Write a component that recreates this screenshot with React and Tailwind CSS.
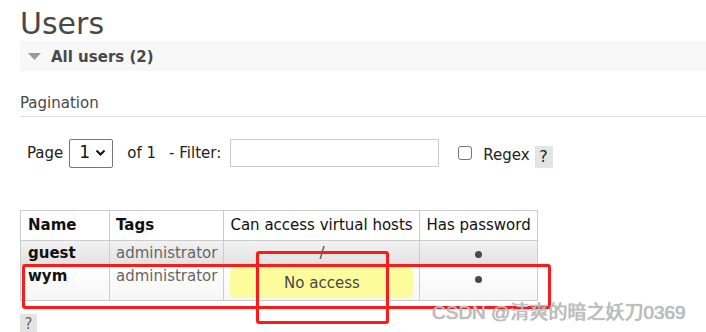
export default function App() {
  const font = { fontFamily: '"DejaVu Sans", Verdana, sans-serif' };
  const dot = <span className="inline-block h-[7px] w-[7px] rounded-full bg-[#484848]" />;
  return (
    <div className="relative w-[706px] h-[332px] overflow-hidden bg-white text-[#484848]" style={font}>
      <div className="pl-[20px]">
        <h1 className="h-[41px] pt-[5px] text-[30px] leading-[38px] text-[#484848] font-normal">Users</h1>
        <div className="flex h-[30px] items-center bg-[#f8f8f8] pl-[8px]">
          <svg width="13" height="8" viewBox="0 0 13 8" className="mr-[10px] mt-[2px]">
            <polygon points="0,0 13,0 6.5,7" fill="#999" />
          </svg>
          <span className="mt-[2px] text-[15px] font-bold text-[#484848]">All users (2)</span>
        </div>
        <div className="mt-[23px] w-[686px] border-b border-[#dddddd] pb-[3px] text-[15px] leading-[19px]">Pagination</div>
        <div className="mt-[21px] flex items-center pl-[7px] text-[15px] text-[#222]">
          <span>Page</span>
          <div className="ml-[6px] flex h-[29px] w-[44px] items-center justify-between rounded-[2px] border border-[#767676] pl-[9px] pr-[6px] text-[17px] text-[#111]">
            <span>1</span>
            <svg width="11" height="8" viewBox="0 0 11 8"><path d="M1.5 1.5 L5.5 5.5 L9.5 1.5" stroke="#111" strokeWidth="2" fill="none" /></svg>
          </div>
          <span className="ml-[14px]">of 1</span>
          <span className="ml-[13px]">- Filter:</span>
          <div className="ml-[9px] h-[28px] w-[209px] border border-[#cccccc]" />
          <div className="ml-[19px] h-[14px] w-[14px] rounded-[3px] border border-[#767676]" />
          <span className="ml-[11px] mt-[5px]">Regex</span>
          <span className="ml-[5px] mt-[8px] flex h-[22px] w-[18px] items-center justify-center bg-[#e4e4e4] text-[16px]">?</span>
        </div>
        <table className="mt-[42px] border-collapse text-[15px]" style={{ tableLayout: 'fixed' }}>
          <colgroup>
            <col style={{ width: 89 }} />
            <col style={{ width: 114 }} />
            <col style={{ width: 196 }} />
            <col style={{ width: 118 }} />
          </colgroup>
          <thead>
            <tr className="h-[30px] text-[#111]">
              <th className="border border-[#cccccc] px-[7px] text-left font-bold">Name</th>
              <th className="border border-[#cccccc] px-[6px] text-left font-bold">Tags</th>
              <th className="border border-[#cccccc] px-[6px] text-left font-normal whitespace-nowrap">Can access virtual hosts</th>
              <th className="border border-[#cccccc] px-[6px] text-left font-normal whitespace-nowrap">Has password</th>
            </tr>
          </thead>
          <tbody>
            <tr className="h-[24px] bg-gradient-to-b from-[#f2f2f2] to-[#e2e2e2] leading-[18px]">
              <td className="border border-[#cccccc] px-[7px] font-bold text-[#111]">guest</td>
              <td className="border border-[#cccccc] px-[6px] text-[#666]">administrator</td>
              <td className="border border-[#cccccc] text-center text-[#484848]">/</td>
              <td className="border border-[#cccccc] text-center">{dot}</td>
            </tr>
            <tr className="h-[36px] bg-gradient-to-b from-[#ffffff] to-[#f6f6f6] leading-[18px]">
              <td className="border border-[#cccccc] px-[7px] pt-[2px] align-top font-bold text-[#111]">wym</td>
              <td className="border border-[#cccccc] px-[6px] pt-[2px] align-top text-[#666]">administrator</td>
              <td className="border border-[#cccccc] px-[6px] py-[2px]">
                <div className="flex h-[31px] items-center justify-center rounded-[6px] bg-[#fcfc9c] text-[#484848]">No access</div>
              </td>
              <td className="border border-[#cccccc] pt-[8px] align-top text-center leading-[10px]">{dot}</td>
            </tr>
          </tbody>
        </table>
        <div className="mt-[13px] flex h-[20px] w-[17px] items-center justify-center bg-[#e4e4e4] text-[15px] text-[#666]">?</div>
      </div>
      <div className="absolute left-[22px] top-[264px] h-[45px] w-[529px] rounded-[3px] border-[3px] border-[#ff1a1a]" />
      <div className="absolute left-[256px] top-[251px] h-[73px] w-[133px] rounded-[3px] border-[3px] border-[#ff1a1a]" />
      <div
        className="absolute left-[432px] top-[301px] text-[19px] leading-[24px] text-[#c0c0c0]"
        style={{ fontFamily: '"Liberation Sans", "Noto Sans CJK SC", sans-serif', textShadow: '0 0 1px #888' }}
      >
        CSDN @清爽的暗之妖刀0369
      </div>
    </div>
  );
}
